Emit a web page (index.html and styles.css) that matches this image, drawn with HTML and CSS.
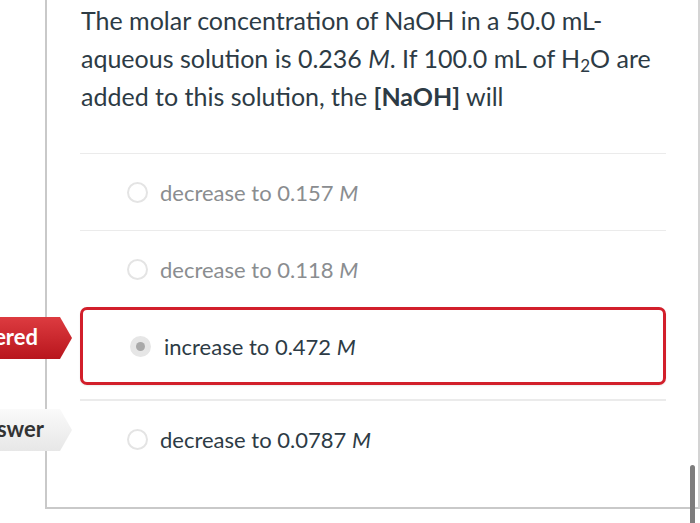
FILE: index.html
```html
<!DOCTYPE html>
<html>
<head>
<meta charset="utf-8">
<link rel="stylesheet" href="styles.css">
</head>
<body>
<div class="page">
  <div class="frame">
    <div class="question">
      The molar concentration of NaOH in a 50.0 mL-<br>aqueous solution is 0.236 <i>M</i>. If 100.0 mL of H<sub>2</sub>O are added to this solution, the <b>[NaOH]</b> will
    </div>
    <div class="answers">
      <div class="answer faded">
        <span class="radio"></span>
        <span class="label">decrease to 0.157 <i>M</i></span>
      </div>
      <div class="answer faded">
        <span class="radio"></span>
        <span class="label">decrease to 0.118 <i>M</i></span>
      </div>
      <div class="answer selected">
        <span class="radio checked"></span>
        <span class="label">increase to 0.472 <i>M</i></span>
      </div>
      <div class="answer last">
        <span class="radio"></span>
        <span class="label">decrease to 0.0787 <i>M</i></span>
      </div>
    </div>
  </div>
  <div class="tag tag-red">ered</div>
  <div class="tag tag-gray">swer</div>
  <div class="scrollbar"></div>
</div>
</body>
</html>
```

FILE: styles.css
```css
html, body {
  margin: 0;
  padding: 0;
  background: #ffffff;
}
body {
  font-family: Lato, "Open Sans", sans-serif;
  color: #2d3b45;
  width: 700px;
  height: 523px;
  overflow: hidden;
}
.page {
  position: relative;
  width: 700px;
  height: 523px;
}
.frame {
  margin-left: 45px;
  width: 651px;
  height: 507px;
  border-left: 2px solid #c9c9c9;
  border-right: 2px solid #d4d4d4;
  border-bottom: 2px solid #c9c9c9;
  box-sizing: content-box;
  padding: 0;
}
.question {
  padding: 1px 20px 0 34px;
  font-size: 25px;
  line-height: 38px;
  height: 153px;
  box-sizing: border-box;
}
.question sub {
  font-size: 17px;
  line-height: 0;
  vertical-align: -4px;
}
.answers {
  margin-left: 33px;
  width: 586px;
  border-top: 1px solid #ebebeb;
}
.answer {
  display: flex;
  align-items: center;
  height: 76px;
  border-bottom: 1px solid #ebebeb;
  font-size: 22px;
  padding-left: 47px;
  box-sizing: content-box;
}
.answer.faded {
  color: #8a8d90;
}
.answer.faded:nth-child(2) {
  border-bottom: none;
  height: 76px;
}
.answer.selected {
  border: 3px solid #d21f2b;
  border-radius: 7px;
  height: 72px;
  padding-left: 47px;
  margin-bottom: 14px;
  box-shadow: 0 1px 2px rgba(0,0,0,0.08);
  box-sizing: content-box;
  width: calc(100% - 53px);
}
.answer.last {
  border-bottom: none;
  height: 76px;
  border-top: 2px solid #ebebeb;
}
.radio {
  width: 17px;
  height: 17px;
  border: 2px solid #e4e4e4;
  border-radius: 50%;
  margin-right: 12px;
  flex: none;
  background: #fff;
}
.radio.checked {
  background: #e6e6e6;
  border-color: #e6e6e6;
  position: relative;
  margin-left: 0;
  margin-right: 13px;
}
.radio.checked::after {
  content: "";
  position: absolute;
  left: 4px;
  top: 4px;
  width: 9px;
  height: 9px;
  border-radius: 50%;
  background: #a9a9a9;
}
.tag {
  position: absolute;
  left: 0;
  height: 42px;
  font-size: 22px;
  font-weight: bold;
  line-height: 40px;
  text-align: right;
  box-sizing: border-box;
  direction: rtl;
  white-space: nowrap;
}
.tag-red {
  top: 317px;
  width: 72px;
  padding-right: 34px;
  color: #ffffff;
  background: linear-gradient(#dd3b40, #b8161d);
  clip-path: polygon(0 0, 60px 0, 72px 50%, 60px 100%, 0 100%);
}
.tag-gray {
  top: 409px;
  width: 72px;
  padding-right: 28px;
  color: #333333;
  background: linear-gradient(#fafafa, #e7e7e7);
  clip-path: polygon(0 0, 60px 0, 72px 50%, 60px 100%, 0 100%);
}
.scrollbar {
  position: absolute;
  left: 690px;
  top: 465px;
  width: 5px;
  height: 70px;
  border-radius: 3px;
  background: #7d7d7d;
}
```
